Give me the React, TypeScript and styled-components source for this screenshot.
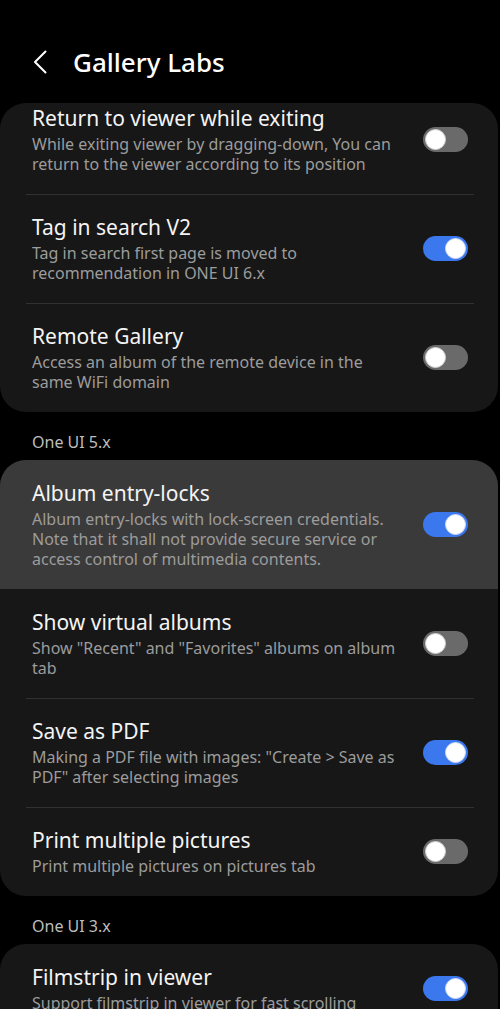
import React, { useState } from 'react'
import styled, { createGlobalStyle, css } from 'styled-components'

const GlobalStyle = createGlobalStyle`
  html, body {
    margin: 0;
    padding: 0;
    background: #000000;
  }
  body {
    font-family: 'Noto Sans', Roboto, sans-serif;
    -webkit-font-smoothing: antialiased;
  }
`

type Item = {
  title: string
  desc: string[]
  on: boolean
  pressed?: boolean
}

type Section = {
  label?: string
  items: Item[]
  first?: boolean
}

// descriptions are kept as the lines shown on the device
const sections: Section[] = [
  {
    first: true,
    items: [
      {
        title: 'Return to viewer while exiting',
        desc: ['While exiting viewer by dragging-down, You can', 'return to the viewer according to its position'],
        on: false
      },
      {
        title: 'Tag in search V2',
        desc: ['Tag in search first page is moved to', 'recommendation in ONE UI 6.x'],
        on: true
      },
      {
        title: 'Remote Gallery',
        desc: ['Access an album of the remote device in the', 'same WiFi domain'],
        on: false
      }
    ]
  },
  {
    label: 'One UI 5.x',
    items: [
      {
        title: 'Album entry-locks',
        desc: [
          'Album entry-locks with lock-screen credentials.',
          'Note that it shall not provide secure service or',
          'access control of multimedia contents.'
        ],
        on: true,
        pressed: true
      },
      {
        title: 'Show virtual albums',
        desc: ['Show "Recent" and "Favorites" albums on album', 'tab'],
        on: false
      },
      {
        title: 'Save as PDF',
        desc: ['Making a PDF file with images: "Create > Save as', 'PDF" after selecting images'],
        on: true
      },
      {
        title: 'Print multiple pictures',
        desc: ['Print multiple pictures on pictures tab'],
        on: false
      }
    ]
  },
  {
    label: 'One UI 3.x',
    items: [
      {
        title: 'Filmstrip in viewer',
        desc: ['Support filmstrip in viewer for fast scrolling'],
        on: true
      }
    ]
  }
]

const Screen = styled.div`
  width: 500px;
  height: 1009px;
  overflow: hidden;
  background: #000;
  display: flex;
  flex-direction: column;
`

const Header = styled.header`
  height: 103px;
  flex-shrink: 0;
  display: flex;
  align-items: center;
  padding: 21px 0 0 33px;
  box-sizing: border-box;
  gap: 26px;
`

const BackButton = styled.button`
  background: none;
  border: none;
  padding: 0;
  display: flex;
  align-items: center;
  cursor: pointer;
`

const Title = styled.h1`
  margin: 0;
  color: #ffffff;
  font-size: 26px;
  font-weight: 500;
  line-height: 34px;
`

const List = styled.div`
  display: flex;
  flex-direction: column;
`

const SectionLabel = styled.div`
  color: #bdbdbd;
  font-size: 16px;
  line-height: 20px;
  padding: 20px 32px 8px;
`

const Card = styled.div<{ $first?: boolean }>`
  width: 498px;
  background: #171717;
  border-radius: 26px;
  overflow: hidden;
  ${({ $first }) => $first && css`
    & > div:first-child {
      padding-top: 2px;
    }
  `}
`

const Row = styled.div<{ $pressed?: boolean }>`
  display: flex;
  align-items: center;
  padding: 20px 30px 20px 32px;
  position: relative;
  background: ${({ $pressed }) => ($pressed ? '#3a3a3a' : 'transparent')};
  & + &::before {
    content: '';
    position: absolute;
    top: 0;
    left: 26px;
    right: 24px;
    height: 1px;
    background: #313131;
  }
`

const TextCol = styled.div`
  flex: 1;
  min-width: 0;
`

const RowTitle = styled.div`
  color: #f4f4f4;
  font-size: 21px;
  line-height: 26px;
`

const RowDesc = styled.div`
  color: #9c9c9c;
  font-size: 16px;
  line-height: 20px;
  margin-top: 3px;
`

const DescLine = styled.span`
  display: block;
  white-space: nowrap;
`

const Track = styled.button<{ $on: boolean }>`
  flex-shrink: 0;
  width: 45px;
  height: 25px;
  border-radius: 13px;
  border: none;
  padding: 0 2px;
  display: flex;
  align-items: center;
  justify-content: ${({ $on }) => ($on ? 'flex-end' : 'flex-start')};
  background: ${({ $on }) => ($on ? '#3b78ee' : '#6a6a6a')};
  cursor: pointer;
`

const Knob = styled.span<{ $on: boolean }>`
  width: 21px;
  height: 21px;
  border-radius: 50%;
  background: #ffffff;
  box-sizing: border-box;
  border: 1px solid ${({ $on }) => ($on ? '#cfd9f0' : '#d0d0d0')};
`

const Toggle = ({ initial }: { initial: boolean }) => {
  const [on, setOn] = useState(initial)
  return (
    <Track $on={on} onClick={() => setOn(!on)}>
      <Knob $on={on} />
    </Track>
  )
}

const ChevronLeft = () => (
  <svg width='14' height='24' viewBox='0 0 14 24' fill='none'>
    <path d='M12.5 1.5 L2 12 L12.5 22.5' stroke='#ffffff' strokeWidth='2' strokeLinecap='round' strokeLinejoin='round' />
  </svg>
)

export default function App () {
  return (
    <>
      <GlobalStyle />
      <Screen>
        <Header>
          <BackButton aria-label='Back'>
            <ChevronLeft />
          </BackButton>
          <Title>Gallery Labs</Title>
        </Header>
        <List>
          {sections.map((section, si) => (
            <React.Fragment key={si}>
              {section.label && <SectionLabel>{section.label}</SectionLabel>}
              <Card $first={section.first}>
                {section.items.map((item) => (
                  <Row key={item.title} $pressed={item.pressed}>
                    <TextCol>
                      <RowTitle>{item.title}</RowTitle>
                      <RowDesc>
                        {item.desc.map((line) => <DescLine key={line}>{line}</DescLine>)}
                      </RowDesc>
                    </TextCol>
                    <Toggle initial={item.on} />
                  </Row>
                ))}
              </Card>
            </React.Fragment>
          ))}
        </List>
      </Screen>
    </>
  )
}
